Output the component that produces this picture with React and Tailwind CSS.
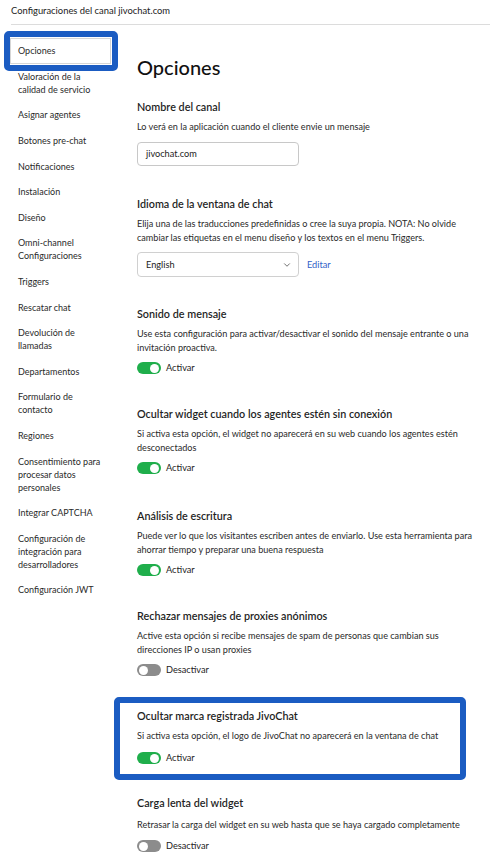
import { ChevronDown } from 'lucide-react';

const menuItems = [
  'Opciones',
  'Valoración de la calidad de servicio',
  'Asignar agentes',
  'Botones pre-chat',
  'Notificaciones',
  'Instalación',
  'Diseño',
  'Omni-channel Configuraciones',
  'Triggers',
  'Rescatar chat',
  'Devolución de llamadas',
  'Departamentos',
  'Formulario de contacto',
  'Regiones',
  'Consentimiento para procesar datos personales',
  'Integrar CAPTCHA',
  'Configuración de integración para desarrolladores',
  'Configuración JWT',
];

const Toggle = ({ on, label, className = 'mt-[6px]' }) => (
  <div className={`flex items-center gap-[5px] h-[14px] ${className}`}>
    <span
      className={`relative inline-block w-[24px] h-[12px] rounded-full ${on ? 'bg-[#1fae4b]' : 'bg-[#8c8c8c]'}`}
    >
      <span
        className={`absolute top-[1.5px] w-[9px] h-[9px] rounded-full bg-white ${on ? 'right-[2px]' : 'left-[2px]'}`}
      />
    </span>
    <span className="text-[9.2px] leading-[14px] text-[#222]">{label}</span>
  </div>
);

const Section = ({ title, description, children, className = '', descClass = 'mt-[6px]' }) => (
  <div className={`relative ${className}`}>
    <h3 className="text-[10.8px] leading-[14px] font-semibold text-[#1f1f1f]">{title}</h3>
    <p className={`${descClass} text-[9.1px] leading-[14px] text-[#2a2a2a]`}>{description}</p>
    {children}
  </div>
);

export default function App() {
  return (
    <div className="min-h-[859px] bg-white text-[#222]" style={{ fontFamily: 'Lato, "Noto Sans", sans-serif' }}>
      <div className="ml-[11px] pt-[4px] pb-[6px] border-b border-[#dcdcdc] text-[9.4px] leading-[14px] text-[#222]">
        Configuraciones del canal jivochat.com
      </div>

      <div className="flex">
        <nav className="w-[137px] shrink-0 pl-[10px] pt-[13px]">
          <ul>
            {menuItems.map((item, i) => (
              <li
                key={item}
                className={`relative w-[101px] px-[7px] py-[5.3px] text-[9px] leading-[13px] text-[#2a2a2a] border ${
                  i === 0 ? 'bg-white border-[#d6d6d6]' : 'border-transparent'
                }`}
              >
                {item}
                {i === 0 && (
                  <span className="absolute -left-[7px] -right-[8px] -top-[8px] -bottom-[8px] border-[6px] border-[#1b5cc2] rounded-[5px]" />
                )}
              </li>
            ))}
          </ul>
        </nav>

        <main className="flex-1 pr-[16px]">
          <h1 className="mt-[28px] text-[20px] leading-[28px] font-medium text-[#111]">Opciones</h1>

          <div className="mt-[19px]">
            <h3 className="text-[10.8px] leading-[14px] font-semibold text-[#1f1f1f]">Nombre del canal</h3>
            <p className="mt-[6px] text-[9.1px] leading-[14px] text-[#2a2a2a]">
              Lo verá en la aplicación cuando el cliente envie un mensaje
            </p>
            <div className="mt-[8px] w-[162px] h-[24px] flex items-center px-[8px] border border-[#c8c8c8] rounded-[4px] text-[9.2px] text-[#222]">
              jivochat.com
            </div>
          </div>

          <Section
            className="mt-[31px]"
            title="Idioma de la ventana de chat"
            description="Elija una de las traducciones predefinidas o cree la suya propia. NOTA: No olvide cambiar las etiquetas en el menu diseño y los textos en el menu Triggers."
          >
            <div className="mt-[7px] flex items-center gap-[8px]">
              <div className="w-[162px] h-[25px] flex items-center justify-between pl-[8px] pr-[6px] border border-[#d0d0d0] rounded-[4px] text-[9.2px] text-[#222]">
                <span>English</span>
                <ChevronDown className="w-[10px] h-[10px] text-[#555]" strokeWidth={2} />
              </div>
              <span className="text-[9.2px] text-[#2f5fc8]">Editar</span>
            </div>
          </Section>

          <Section
            className="mt-[30px]"
            title="Sonido de mensaje"
            description="Use esta configuración para activar/desactivar el sonido del mensaje entrante o una invitación proactiva."
          >
            <Toggle on label="Activar" />
          </Section>

          <Section
            className="mt-[32px]"
            title="Ocultar widget cuando los agentes estén sin conexión"
            description="Si activa esta opción, el widget no aparecerá en su web cuando los agentes estén desconectados"
          >
            <Toggle on label="Activar" />
          </Section>

          <Section
            className="mt-[34px]"
            title="Análisis de escritura"
            description="Puede ver lo que los visitantes escriben antes de enviarlo. Use esta herramienta para ahorrar tiempo y preparar una buena respuesta"
          >
            <Toggle on label="Activar" />
          </Section>

          <Section
            className="mt-[32px]"
            title="Rechazar mensajes de proxies anónimos"
            description="Active esta opción si recibe mensajes de spam de personas que cambian sus direcciones IP o usan proxies"
          >
            <Toggle label="Desactivar" />
          </Section>

          <Section
            className="mt-[32px]"
            title="Ocultar marca registrada JivoChat"
            description="Si activa esta opción, el logo de JivoChat no aparecerá en la ventana de chat"
          >
            <Toggle on label="Activar" className="mt-[8px]" />
            <span className="absolute -left-[23px] -top-[12px] -bottom-[15px] w-[352px] border-[6px] border-[#1b5cc2] rounded-[5px]" />
          </Section>

          <Section
            className="mt-[31px]"
            descClass="mt-[8px]"
            title="Carga lenta del widget"
            description="Retrasar la carga del widget en su web hasta que se haya cargado completamente"
          >
            <Toggle label="Desactivar" className="mt-[7px]" />
          </Section>
        </main>
      </div>
    </div>
  );
}
